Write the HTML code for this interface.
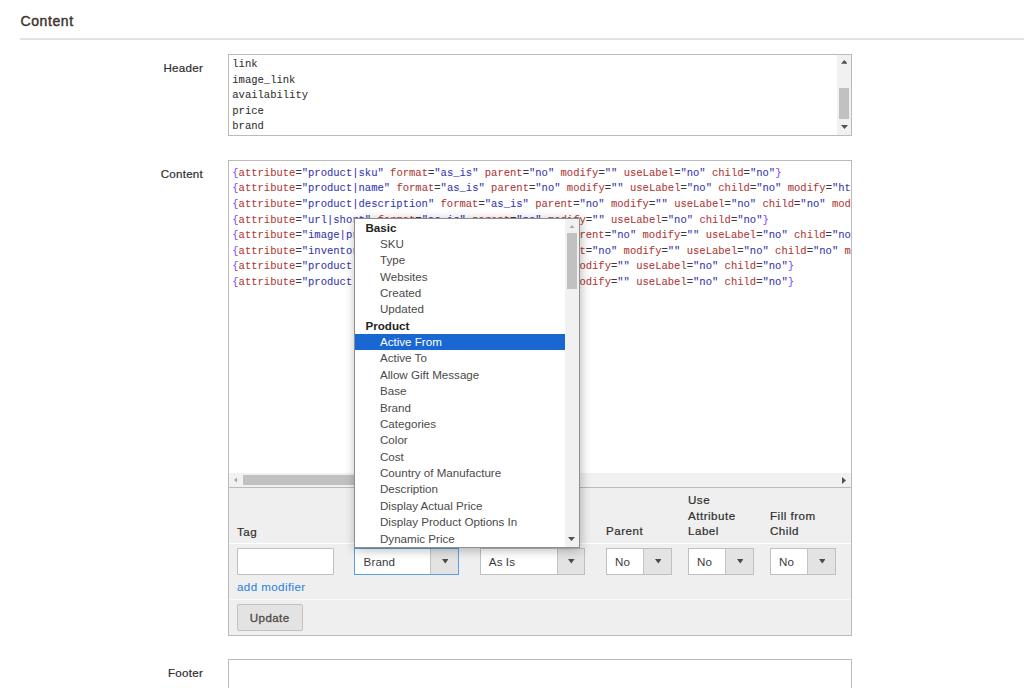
<!DOCTYPE html>
<html><head><meta charset="utf-8"><style>
html,body{margin:0;padding:0;background:#fff;width:1024px;height:688px;overflow:hidden;position:relative}
.t{position:absolute;white-space:nowrap;font-family:"Liberation Sans",sans-serif}
.b{position:absolute}
.m{position:absolute;white-space:pre;font-family:"Liberation Mono",monospace;font-size:10.52px;line-height:15.55px;-webkit-text-stroke:0.08px currentColor}
</style></head><body>
<div class="t" style="top:13px;font-size:14px;line-height:16.8px;color:#41362f;font-weight:normal;left:20.50px;-webkit-text-stroke:0.45px #41362f;letter-spacing:0.6px;">Content</div>
<div class="b" style="left:20px;top:38px;width:1004px;height:2px;background:#e5e2dc;"></div>
<div class="t" style="top:61px;font-size:11.6px;line-height:13.92px;color:#303030;font-weight:normal;right:821.00px;-webkit-text-stroke:0.22px #303030;letter-spacing:0.25px;">Header</div>
<div class="b" style="left:228px;top:54px;width:624px;height:82px;border:1px solid #bbbbbb;box-sizing:border-box;background:#fff;"></div>
<div class="m" style="left:232.3px;top:57px;color:#303030">link</div>
<div class="m" style="left:232.3px;top:73px;color:#303030">image_link</div>
<div class="m" style="left:232.3px;top:88px;color:#303030">availability</div>
<div class="m" style="left:232.3px;top:104px;color:#303030">price</div>
<div class="m" style="left:232.3px;top:119px;color:#303030">brand</div>
<div class="b" style="left:837px;top:55px;width:14px;height:80px;background:#f1f1f1;"></div>
<div class="b" style="left:839px;top:88px;width:10px;height:31px;background:#c1c1c1;"></div>
<svg class="b" style="left:840.90px;top:60.40px" width="6.6" height="3.8" viewBox="0 0 6.6 3.8"><polygon points="0,3.8 6.6,3.8 3.3,0" fill="#505050"/></svg>
<svg class="b" style="left:840.50px;top:125.40px" width="7" height="4" viewBox="0 0 7 4"><polygon points="0,0 7,0 3.5,4" fill="#505050"/></svg>
<div class="t" style="top:167px;font-size:11.6px;line-height:13.92px;color:#303030;font-weight:normal;right:821.00px;-webkit-text-stroke:0.22px #303030;letter-spacing:0.25px;">Content</div>
<div class="b" style="left:228px;top:160px;width:624px;height:328px;border:1px solid #bbbbbb;box-sizing:border-box;background:#fff;"></div>
<div class="b" style="left:229px;top:161px;width:622px;height:312px;overflow:hidden"><div class="m" style="left:3.3px;top:5px;line-height:15.6px"><span style="color:#7c4dff">{</span><span style="color:#b03838">attribute</span><span style="color:#3a3a3a">=</span><span style="color:#3535b0">"product|sku"</span> <span style="color:#b03838">format</span><span style="color:#3a3a3a">=</span><span style="color:#3535b0">"as_is"</span> <span style="color:#b03838">parent</span><span style="color:#3a3a3a">=</span><span style="color:#3535b0">"no"</span> <span style="color:#b03838">modify</span><span style="color:#3a3a3a">=</span><span style="color:#3535b0">""</span> <span style="color:#b03838">useLabel</span><span style="color:#3a3a3a">=</span><span style="color:#3535b0">"no"</span> <span style="color:#b03838">child</span><span style="color:#3a3a3a">=</span><span style="color:#3535b0">"no"</span><span style="color:#7c4dff">}</span></div><div class="m" style="left:3.3px;top:20px;line-height:15.6px"><span style="color:#7c4dff">{</span><span style="color:#b03838">attribute</span><span style="color:#3a3a3a">=</span><span style="color:#3535b0">"product|name"</span> <span style="color:#b03838">format</span><span style="color:#3a3a3a">=</span><span style="color:#3535b0">"as_is"</span> <span style="color:#b03838">parent</span><span style="color:#3a3a3a">=</span><span style="color:#3535b0">"no"</span> <span style="color:#b03838">modify</span><span style="color:#3a3a3a">=</span><span style="color:#3535b0">""</span> <span style="color:#b03838">useLabel</span><span style="color:#3a3a3a">=</span><span style="color:#3535b0">"no"</span> <span style="color:#b03838">child</span><span style="color:#3a3a3a">=</span><span style="color:#3535b0">"no"</span> <span style="color:#b03838">modify</span><span style="color:#3a3a3a">=</span><span style="color:#3535b0">"html_escape"</span><span style="color:#7c4dff">}</span></div><div class="m" style="left:3.3px;top:36px;line-height:15.6px"><span style="color:#7c4dff">{</span><span style="color:#b03838">attribute</span><span style="color:#3a3a3a">=</span><span style="color:#3535b0">"product|description"</span> <span style="color:#b03838">format</span><span style="color:#3a3a3a">=</span><span style="color:#3535b0">"as_is"</span> <span style="color:#b03838">parent</span><span style="color:#3a3a3a">=</span><span style="color:#3535b0">"no"</span> <span style="color:#b03838">modify</span><span style="color:#3a3a3a">=</span><span style="color:#3535b0">""</span> <span style="color:#b03838">useLabel</span><span style="color:#3a3a3a">=</span><span style="color:#3535b0">"no"</span> <span style="color:#b03838">child</span><span style="color:#3a3a3a">=</span><span style="color:#3535b0">"no"</span> <span style="color:#b03838">modify</span><span style="color:#3a3a3a">=</span><span style="color:#3535b0">"html_escape"</span><span style="color:#7c4dff">}</span></div><div class="m" style="left:3.3px;top:52px;line-height:15.6px"><span style="color:#7c4dff">{</span><span style="color:#b03838">attribute</span><span style="color:#3a3a3a">=</span><span style="color:#3535b0">"url|short"</span> <span style="color:#b03838">format</span><span style="color:#3a3a3a">=</span><span style="color:#3535b0">"as_is"</span> <span style="color:#b03838">parent</span><span style="color:#3a3a3a">=</span><span style="color:#3535b0">"no"</span> <span style="color:#b03838">modify</span><span style="color:#3a3a3a">=</span><span style="color:#3535b0">""</span> <span style="color:#b03838">useLabel</span><span style="color:#3a3a3a">=</span><span style="color:#3535b0">"no"</span> <span style="color:#b03838">child</span><span style="color:#3a3a3a">=</span><span style="color:#3535b0">"no"</span><span style="color:#7c4dff">}</span></div><div class="m" style="left:3.3px;top:67px;line-height:15.6px"><span style="color:#7c4dff">{</span><span style="color:#b03838">attribute</span><span style="color:#3a3a3a">=</span><span style="color:#3535b0">"image|product_image_link"</span> <span style="color:#b03838">format</span><span style="color:#3a3a3a">=</span><span style="color:#3535b0">"as_is"</span> <span style="color:#b03838">parent</span><span style="color:#3a3a3a">=</span><span style="color:#3535b0">"no"</span> <span style="color:#b03838">modify</span><span style="color:#3a3a3a">=</span><span style="color:#3535b0">""</span> <span style="color:#b03838">useLabel</span><span style="color:#3a3a3a">=</span><span style="color:#3535b0">"no"</span> <span style="color:#b03838">child</span><span style="color:#3a3a3a">=</span><span style="color:#3535b0">"no"</span> <span style="color:#b03838">modify</span><span style="color:#3a3a3a">=</span><span style="color:#3535b0">"if_empty"</span><span style="color:#7c4dff">}</span></div><div class="m" style="left:3.3px;top:83px;line-height:15.6px"><span style="color:#7c4dff">{</span><span style="color:#b03838">attribute</span><span style="color:#3a3a3a">=</span><span style="color:#3535b0">"inventory|is_in_stock"</span> <span style="color:#b03838">format</span><span style="color:#3a3a3a">=</span><span style="color:#3535b0">"as_is"</span> <span style="color:#b03838">parent</span><span style="color:#3a3a3a">=</span><span style="color:#3535b0">"no"</span> <span style="color:#b03838">modify</span><span style="color:#3a3a3a">=</span><span style="color:#3535b0">""</span> <span style="color:#b03838">useLabel</span><span style="color:#3a3a3a">=</span><span style="color:#3535b0">"no"</span> <span style="color:#b03838">child</span><span style="color:#3a3a3a">=</span><span style="color:#3535b0">"no"</span> <span style="color:#b03838">modify</span><span style="color:#3a3a3a">=</span><span style="color:#3535b0">"replace"</span><span style="color:#7c4dff">}</span></div><div class="m" style="left:3.3px;top:98px;line-height:15.6px"><span style="color:#7c4dff">{</span><span style="color:#b03838">attribute</span><span style="color:#3a3a3a">=</span><span style="color:#3535b0">"product|price"</span> <span style="color:#b03838">format</span><span style="color:#3a3a3a">=</span><span style="color:#3535b0">"as_is"</span> <span style="color:#b03838">parent</span><span style="color:#3a3a3a">=</span><span style="color:#3535b0">"no"</span> <span style="color:#b03838">modify</span><span style="color:#3a3a3a">=</span><span style="color:#3535b0">""</span> <span style="color:#b03838">useLabel</span><span style="color:#3a3a3a">=</span><span style="color:#3535b0">"no"</span> <span style="color:#b03838">child</span><span style="color:#3a3a3a">=</span><span style="color:#3535b0">"no"</span><span style="color:#7c4dff">}</span></div><div class="m" style="left:3.3px;top:114px;line-height:15.6px"><span style="color:#7c4dff">{</span><span style="color:#b03838">attribute</span><span style="color:#3a3a3a">=</span><span style="color:#3535b0">"product|brand"</span> <span style="color:#b03838">format</span><span style="color:#3a3a3a">=</span><span style="color:#3535b0">"as_is"</span> <span style="color:#b03838">parent</span><span style="color:#3a3a3a">=</span><span style="color:#3535b0">"no"</span> <span style="color:#b03838">modify</span><span style="color:#3a3a3a">=</span><span style="color:#3535b0">""</span> <span style="color:#b03838">useLabel</span><span style="color:#3a3a3a">=</span><span style="color:#3535b0">"no"</span> <span style="color:#b03838">child</span><span style="color:#3a3a3a">=</span><span style="color:#3535b0">"no"</span><span style="color:#7c4dff">}</span></div></div>
<div class="b" style="left:229px;top:473px;width:622px;height:14px;background:#f1f1f1;"></div>
<div class="b" style="left:243px;top:475px;width:257px;height:10px;background:#c1c1c1;"></div>
<svg class="b" style="left:233.50px;top:477.00px" width="3.6" height="6" viewBox="0 0 3.6 6"><polygon points="3.6,0 3.6,6 0,3.0" fill="#a3a3a3"/></svg>
<svg class="b" style="left:842.40px;top:476.50px" width="4" height="7" viewBox="0 0 4 7"><polygon points="0,0 0,7 4,3.5" fill="#505050"/></svg>
<div class="b" style="left:228px;top:488px;width:624px;height:148px;background:#efefef;border:1px solid #bbbbbb;border-top:0;box-sizing:border-box;"></div>
<div class="b" style="left:229px;top:543px;width:622px;height:1px;background:#fff;"></div>
<div class="b" style="left:229px;top:599px;width:622px;height:1px;background:#f8f8f8;"></div>
<div class="t" style="top:525px;font-size:11.6px;line-height:13.92px;color:#303030;font-weight:normal;left:237.00px;-webkit-text-stroke:0.22px #303030;letter-spacing:0.5px;">Tag</div>
<div class="t" style="top:524px;font-size:11.6px;line-height:13.92px;color:#303030;font-weight:normal;left:606.00px;-webkit-text-stroke:0.22px #303030;letter-spacing:0.5px;">Parent</div>
<div class="t" style="top:493px;font-size:11.6px;line-height:13.92px;color:#303030;font-weight:normal;left:688.00px;-webkit-text-stroke:0.22px #303030;letter-spacing:0.5px;">Use</div>
<div class="t" style="top:509px;font-size:11.6px;line-height:13.92px;color:#303030;font-weight:normal;left:688.00px;-webkit-text-stroke:0.22px #303030;letter-spacing:0.5px;">Attribute</div>
<div class="t" style="top:524px;font-size:11.6px;line-height:13.92px;color:#303030;font-weight:normal;left:688.00px;-webkit-text-stroke:0.22px #303030;letter-spacing:0.5px;">Label</div>
<div class="t" style="top:509px;font-size:11.6px;line-height:13.92px;color:#303030;font-weight:normal;left:770.00px;-webkit-text-stroke:0.22px #303030;letter-spacing:0.5px;">Fill from</div>
<div class="t" style="top:524px;font-size:11.6px;line-height:13.92px;color:#303030;font-weight:normal;left:770.00px;-webkit-text-stroke:0.22px #303030;letter-spacing:0.5px;">Child</div>
<div class="b" style="left:237px;top:548px;width:97px;height:27px;background:#fff;border:1px solid #bfbfbf;border-radius:1px;box-sizing:border-box;"></div>
<div class="b" style="left:354px;top:548px;width:105px;height:27px;background:#fff;border:1px solid #5a9fe0;box-sizing:border-box;"></div>
<div class="b" style="left:430px;top:549px;width:28px;height:25px;background:#e3e3e3;border-left:1px solid #c4c4c4;box-sizing:border-box;"></div>
<svg class="b" style="left:441.60px;top:559.40px" width="6.6" height="4.6" viewBox="0 0 6.6 4.6"><polygon points="0,0 6.6,0 3.3,4.6" fill="#514943"/></svg>
<div class="t" style="top:555px;font-size:11.6px;line-height:13.92px;color:#3a3a3a;font-weight:normal;left:363.60px;letter-spacing:0.1px;">Brand</div>
<div class="b" style="left:480px;top:548px;width:105px;height:27px;background:#fff;border:1px solid #bfbfbf;box-sizing:border-box;"></div>
<div class="b" style="left:557px;top:549px;width:27px;height:25px;background:#e3e3e3;border-left:1px solid #c4c4c4;box-sizing:border-box;"></div>
<svg class="b" style="left:568.10px;top:559.40px" width="6.6" height="4.6" viewBox="0 0 6.6 4.6"><polygon points="0,0 6.6,0 3.3,4.6" fill="#514943"/></svg>
<div class="t" style="top:555px;font-size:11.6px;line-height:13.92px;color:#3a3a3a;font-weight:normal;left:488.80px;letter-spacing:0.1px;">As Is</div>
<div class="b" style="left:606px;top:548px;width:66px;height:27px;background:#fff;border:1px solid #bfbfbf;box-sizing:border-box;"></div>
<div class="b" style="left:643px;top:549px;width:28px;height:25px;background:#e3e3e3;border-left:1px solid #c4c4c4;box-sizing:border-box;"></div>
<svg class="b" style="left:654.60px;top:559.40px" width="6.6" height="4.6" viewBox="0 0 6.6 4.6"><polygon points="0,0 6.6,0 3.3,4.6" fill="#514943"/></svg>
<div class="t" style="top:555px;font-size:11.6px;line-height:13.92px;color:#3a3a3a;font-weight:normal;left:615.00px;letter-spacing:0.1px;">No</div>
<div class="b" style="left:688px;top:548px;width:66px;height:27px;background:#fff;border:1px solid #bfbfbf;box-sizing:border-box;"></div>
<div class="b" style="left:725px;top:549px;width:28px;height:25px;background:#e3e3e3;border-left:1px solid #c4c4c4;box-sizing:border-box;"></div>
<svg class="b" style="left:736.60px;top:559.40px" width="6.6" height="4.6" viewBox="0 0 6.6 4.6"><polygon points="0,0 6.6,0 3.3,4.6" fill="#514943"/></svg>
<div class="t" style="top:555px;font-size:11.6px;line-height:13.92px;color:#3a3a3a;font-weight:normal;left:697.00px;letter-spacing:0.1px;">No</div>
<div class="b" style="left:770px;top:548px;width:66px;height:27px;background:#fff;border:1px solid #bfbfbf;box-sizing:border-box;"></div>
<div class="b" style="left:807px;top:549px;width:28px;height:25px;background:#e3e3e3;border-left:1px solid #c4c4c4;box-sizing:border-box;"></div>
<svg class="b" style="left:818.60px;top:559.40px" width="6.6" height="4.6" viewBox="0 0 6.6 4.6"><polygon points="0,0 6.6,0 3.3,4.6" fill="#514943"/></svg>
<div class="t" style="top:555px;font-size:11.6px;line-height:13.92px;color:#3a3a3a;font-weight:normal;left:779.00px;letter-spacing:0.1px;">No</div>
<div class="t" style="top:580px;font-size:11.6px;line-height:13.92px;color:#1f7fdc;font-weight:normal;left:237.00px;letter-spacing:0.4px;">add modifier</div>
<div class="b" style="left:237px;top:604px;width:66px;height:27px;background:#e3e3e3;border:1px solid #c2c2c2;border-radius:2px;box-sizing:border-box;"></div>
<div class="t" style="top:611px;font-size:11.6px;line-height:13.92px;color:#514943;font-weight:normal;left:249.80px;-webkit-text-stroke:0.3px #514943;letter-spacing:0.4px;">Update</div>
<div class="t" style="top:666px;font-size:11.6px;line-height:13.92px;color:#303030;font-weight:normal;right:821.00px;-webkit-text-stroke:0.22px #303030;letter-spacing:0.25px;">Footer</div>
<div class="b" style="left:228px;top:659px;width:624px;height:41px;border:1px solid #bbbbbb;box-sizing:border-box;background:#fff;"></div>
<div class="b" style="left:354px;top:218px;width:226px;height:330px;border:1px solid #8e8e8e;box-sizing:border-box;background:#fff;box-shadow:1px 2px 10px rgba(0,0,0,0.28);overflow:hidden"></div>
<div class="t" style="top:221px;font-size:11.6px;line-height:13.92px;color:#222;font-weight:bold;left:365.50px;">Basic</div>
<div class="t" style="top:237px;font-size:11.6px;line-height:13.92px;color:#4a4a4a;font-weight:normal;left:380.00px;">SKU</div>
<div class="t" style="top:253px;font-size:11.6px;line-height:13.92px;color:#4a4a4a;font-weight:normal;left:380.00px;">Type</div>
<div class="t" style="top:270px;font-size:11.6px;line-height:13.92px;color:#4a4a4a;font-weight:normal;left:380.00px;">Websites</div>
<div class="t" style="top:286px;font-size:11.6px;line-height:13.92px;color:#4a4a4a;font-weight:normal;left:380.00px;">Created</div>
<div class="t" style="top:302px;font-size:11.6px;line-height:13.92px;color:#4a4a4a;font-weight:normal;left:380.00px;">Updated</div>
<div class="t" style="top:319px;font-size:11.6px;line-height:13.92px;color:#222;font-weight:bold;left:365.50px;">Product</div>
<div class="b" style="left:355px;top:334px;width:210px;height:16px;background:#1967d2;"></div>
<div class="t" style="top:335px;font-size:11.6px;line-height:13.92px;color:#ffffff;font-weight:normal;left:380.00px;">Active From</div>
<div class="t" style="top:351px;font-size:11.6px;line-height:13.92px;color:#4a4a4a;font-weight:normal;left:380.00px;">Active To</div>
<div class="t" style="top:368px;font-size:11.6px;line-height:13.92px;color:#4a4a4a;font-weight:normal;left:380.00px;">Allow Gift Message</div>
<div class="t" style="top:384px;font-size:11.6px;line-height:13.92px;color:#4a4a4a;font-weight:normal;left:380.00px;">Base</div>
<div class="t" style="top:401px;font-size:11.6px;line-height:13.92px;color:#4a4a4a;font-weight:normal;left:380.00px;">Brand</div>
<div class="t" style="top:417px;font-size:11.6px;line-height:13.92px;color:#4a4a4a;font-weight:normal;left:380.00px;">Categories</div>
<div class="t" style="top:433px;font-size:11.6px;line-height:13.92px;color:#4a4a4a;font-weight:normal;left:380.00px;">Color</div>
<div class="t" style="top:450px;font-size:11.6px;line-height:13.92px;color:#4a4a4a;font-weight:normal;left:380.00px;">Cost</div>
<div class="t" style="top:466px;font-size:11.6px;line-height:13.92px;color:#4a4a4a;font-weight:normal;left:380.00px;">Country of Manufacture</div>
<div class="t" style="top:482px;font-size:11.6px;line-height:13.92px;color:#4a4a4a;font-weight:normal;left:380.00px;">Description</div>
<div class="t" style="top:499px;font-size:11.6px;line-height:13.92px;color:#4a4a4a;font-weight:normal;left:380.00px;">Display Actual Price</div>
<div class="t" style="top:515px;font-size:11.6px;line-height:13.92px;color:#4a4a4a;font-weight:normal;left:380.00px;">Display Product Options In</div>
<div class="t" style="top:532px;font-size:11.6px;line-height:13.92px;color:#4a4a4a;font-weight:normal;left:380.00px;">Dynamic Price</div>
<div class="b" style="left:565px;top:219px;width:14px;height:328px;background:#f1f1f1;"></div>
<div class="b" style="left:567px;top:233px;width:10px;height:56px;background:#c1c1c1;"></div>
<svg class="b" style="left:568.70px;top:224.80px" width="6" height="3.6" viewBox="0 0 6 3.6"><polygon points="0,3.6 6,3.6 3.0,0" fill="#a8a8a8"/></svg>
<svg class="b" style="left:568.30px;top:537.00px" width="7" height="4" viewBox="0 0 7 4"><polygon points="0,0 7,0 3.5,4" fill="#505050"/></svg>
</body></html>
